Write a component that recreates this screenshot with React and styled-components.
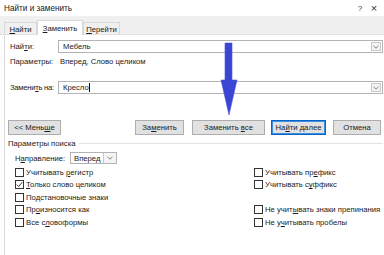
import React from "react";
import styled, { createGlobalStyle } from "styled-components";

const Global = createGlobalStyle`
  html, body { margin: 0; padding: 0; background: #fff; overflow: hidden; }
  body {
    font-family: "Liberation Sans", Arial, sans-serif;
    font-size: 7.7px;
    color: #1a1a1a;
    width: 384px;
    height: 255px;
  }
  u { text-decoration: underline; text-underline-offset: 1px; }
`;

const Window = styled.div`
  position: relative;
  width: 384px;
  height: 255px;
  overflow: hidden;
  background: #fff;
  white-space: nowrap;
`;

const TitleBar = styled.div`
  height: 16px;
  display: flex;
  align-items: center;
  padding-left: 4px;
  font-size: 8.2px;
`;

const TitleText = styled.div`
  flex: 1;
`;

const TitleIcon = styled.div`
  width: ${(p) => p.$w}px;
  text-align: center;
  color: #333;
  font-size: ${(p) => p.$size}px;
`;

const TabStrip = styled.div`
  height: 19px;
  background: #f0f0f0;
  display: flex;
  align-items: flex-end;
  padding-left: 4px;
  border-bottom: 1px dotted #d4d4d4;
  box-sizing: border-box;
`;

const Tab = styled.div`
  height: ${(p) => (p.$active ? 15 : 12)}px;
  width: ${(p) => p.$w}px;
  box-sizing: border-box;
  display: flex;
  align-items: center;
  justify-content: center;
  background: ${(p) => (p.$active ? "#fff" : "#f0f0f0")};
  border: 1px solid #d9d9d9;
  border-bottom: none;
  margin-bottom: ${(p) => (p.$active ? "-1px" : "0")};
  padding-top: ${(p) => (p.$active ? "0" : "1px")};
`;

const Panel = styled.div`
  margin-left: 4px;
  border-left: 1px solid #dadada;
  height: 220px;
  padding: 5px 1px 0 5px;
  box-sizing: border-box;
`;

const FieldRow = styled.div`
  display: flex;
  align-items: center;
  height: 13px;
  margin-top: ${(p) => p.$mt || 0}px;
`;

const Label = styled.div`
  width: 48px;
  flex: none;
  white-space: nowrap;
  letter-spacing: ${(p) => (p.$tight ? "-0.3px" : "0")};
`;

const InputBox = styled.div`
  flex: 1;
  height: 13px;
  box-sizing: border-box;
  border: 1px solid #b4b4b4;
  display: flex;
  align-items: center;
  padding-left: 4px;
  background: #fff;
`;

const InputText = styled.div`
  flex: 1;
  display: flex;
  align-items: center;
`;

const Caret = styled.span`
  display: inline-block;
  width: 1px;
  height: 9px;
  background: #000;
  margin-left: 0.5px;
`;

const DropBtn = styled.div`
  width: 10px;
  height: 9px;
  box-sizing: border-box;
  border: 1px solid #c8c8c8;
  background: #f4f4f4;
  margin-right: 1px;
  display: flex;
  align-items: center;
  justify-content: center;
`;

const InfoRow = styled.div`
  display: flex;
  align-items: center;
  height: 11px;
  margin-top: 3px;
`;

const InfoValue = styled.div`
  padding-left: 2px;
`;

const ButtonRow = styled.div`
  display: flex;
  align-items: center;
  height: 15px;
  margin-top: 26px;
  margin-left: -2px;
`;

const Button = styled.div`
  width: ${(p) => p.$w}px;
  height: 15px;
  box-sizing: border-box;
  background: #e1e1e1;
  border: 1px solid ${(p) => (p.$primary ? "#0a64c8" : "#adadad")};
  box-shadow: ${(p) => (p.$primary ? "inset 0 0 0 1px #3c8ee0" : "none")};
  display: flex;
  align-items: center;
  justify-content: center;
  margin-left: ${(p) => p.$ml || 0}px;
  flex: none;
`;

const GroupHeader = styled.div`
  display: flex;
  align-items: center;
  height: 10px;
  margin-top: 3px;
  margin-left: -2px;
`;

const GroupLine = styled.div`
  flex: 1;
  height: 1px;
  background: #e3e3e3;
  margin-left: 3px;
`;

const DirRow = styled.div`
  display: flex;
  align-items: center;
  height: 12px;
  margin-top: 4px;
  padding-left: 5px;
`;

const DirLabel = styled.div`
  width: 55px;
`;

const Select = styled.div`
  width: 47px;
  height: 12px;
  box-sizing: border-box;
  border: 1px solid #b4b4b4;
  display: flex;
  align-items: stretch;
  background: #fff;
`;

const SelectText = styled.div`
  flex: 1;
  display: flex;
  align-items: center;
  padding-left: 3px;
`;

const SelectBtn = styled.div`
  width: 12px;
  border-left: 1px solid #c8c8c8;
  background: #f4f4f4;
  display: flex;
  align-items: center;
  justify-content: center;
`;

const OptionsGrid = styled.div`
  display: grid;
  grid-template-columns: 239px 1fr;
  grid-auto-rows: 12.5px;
  margin-top: 2px;
  padding-left: 5px;
`;

const Check = styled.div`
  display: flex;
  align-items: center;
  grid-column: ${(p) => p.$col};
  grid-row: ${(p) => p.$row};
  white-space: nowrap;
`;

const Box = styled.div`
  width: 9px;
  height: 9px;
  box-sizing: border-box;
  border: 1px solid #333;
  background: #fff;
  margin-right: 2px;
  display: flex;
  align-items: center;
  justify-content: center;
  flex: none;
`;

const Arrow = styled.svg`
  position: absolute;
  left: 220px;
  top: 42px;
`;

const Chevron = () => (
  <svg width="6" height="4" viewBox="0 0 6 4">
    <path d="M0.5 0.8 L3 3.2 L5.5 0.8" fill="none" stroke="#666" strokeWidth="0.8" />
  </svg>
);

const CheckItem = ({ col, row, checked, children }) => (
  <Check $col={col} $row={row}>
    <Box>
      {checked && (
        <svg width="7" height="7" viewBox="0 0 7 7">
          <path d="M0.8 3.6 L2.7 5.5 L6.3 1.2" fill="none" stroke="#222" strokeWidth="0.9" />
        </svg>
      )}
    </Box>
    <span>{children}</span>
  </Check>
);

export default function App() {
  return (
    <Window>
      <Global />
      <TitleBar>
        <TitleText>Найти и заменить</TitleText>
        <TitleIcon $w={12} $size={8}>?</TitleIcon>
        <TitleIcon $w={16} $size={11} style={{ marginRight: 2 }}>×</TitleIcon>
      </TitleBar>
      <TabStrip>
        <Tab $w={33}><span><u>Н</u>айти</span></Tab>
        <Tab $w={46} $active><span><u>З</u>аменить</span></Tab>
        <Tab $w={37}><span><u>П</u>ерейти</span></Tab>
      </TabStrip>
      <Panel>
        <FieldRow>
          <Label>Най<u>т</u>и:</Label>
          <InputBox>
            <InputText>Мебель</InputText>
            <DropBtn><Chevron /></DropBtn>
          </InputBox>
        </FieldRow>
        <InfoRow>
          <Label>Параметры:</Label>
          <InfoValue>Вперед, Слово целиком</InfoValue>
        </InfoRow>
        <FieldRow $mt={14}>
          <Label $tight>Замени<u>т</u>ь на:</Label>
          <InputBox>
            <InputText>Кресло<Caret /></InputText>
            <DropBtn><Chevron /></DropBtn>
          </InputBox>
        </FieldRow>
        <ButtonRow>
          <Button $w={53}><span>&lt;&lt; Мень<u>ш</u>е</span></Button>
          <Button $w={49} $ml={74}><span>За<u>м</u>енить</span></Button>
          <Button $w={73} $ml={8}><span>Заменить <u>в</u>се</span></Button>
          <Button $w={55} $ml={6} $primary><span>На<u>й</u>ти далее</span></Button>
          <Button $w={48} $ml={7}><span>Отмена</span></Button>
        </ButtonRow>
        <GroupHeader>
          <span>Параметры поиска</span>
          <GroupLine />
        </GroupHeader>
        <DirRow>
          <DirLabel>Н<u>а</u>правление:</DirLabel>
          <Select>
            <SelectText>Вперед</SelectText>
            <SelectBtn><Chevron /></SelectBtn>
          </Select>
        </DirRow>
        <OptionsGrid>
          <CheckItem col={1} row={1}>Учитывать <u>р</u>егистр</CheckItem>
          <CheckItem col={1} row={2} checked><u>Т</u>олько слово целиком</CheckItem>
          <CheckItem col={1} row={3}>По<u>д</u>становочные знаки</CheckItem>
          <CheckItem col={1} row={4}>Пр<u>о</u>износится как</CheckItem>
          <CheckItem col={1} row={5}>Все с<u>л</u>овоформы</CheckItem>
          <CheckItem col={2} row={1}>Учитывать пр<u>е</u>фикс</CheckItem>
          <CheckItem col={2} row={2}>Учитывать с<u>у</u>ффикс</CheckItem>
          <CheckItem col={2} row={4}>Не учит<u>ы</u>вать знаки препинания</CheckItem>
          <CheckItem col={2} row={5}>Не у<u>ч</u>итывать пробелы</CheckItem>
        </OptionsGrid>
      </Panel>
      <Arrow width="18" height="75" viewBox="0 0 18 75">
        <path d="M5 1 H12 V38 H17 L9 73 L1 38 H5 Z" fill="#3b45d4" stroke="#4a55e0" strokeWidth="0.6" />
      </Arrow>
    </Window>
  );
}
